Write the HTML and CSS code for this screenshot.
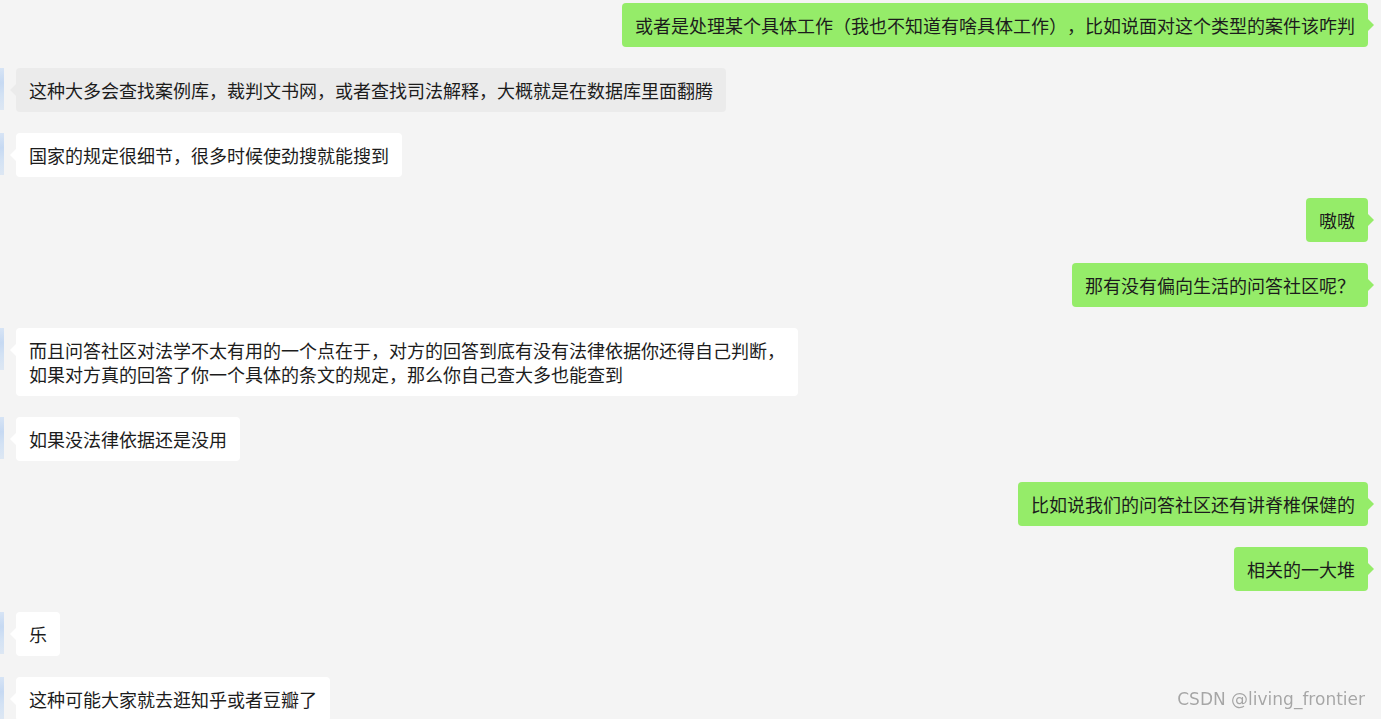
FILE: index.html
```html
<!DOCTYPE html>
<html lang="zh-CN">
<head>
<meta charset="utf-8">
<title>聊天记录</title>
<link rel="stylesheet" href="styles.css">
</head>
<body>
<div class="chat">
  <div class="row right"><div class="bubble green">或者是处理某个具体工作（我也不知道有啥具体工作），比如说面对这个类型的案件该咋判</div></div>
  <div class="row left"><div class="avatar"></div><div class="bubble gray">这种大多会查找案例库，裁判文书网，或者查找司法解释，大概就是在数据库里面翻腾</div></div>
  <div class="row left"><div class="avatar"></div><div class="bubble white">国家的规定很细节，很多时候使劲搜就能搜到</div></div>
  <div class="row right"><div class="bubble green">嗷嗷</div></div>
  <div class="row right"><div class="bubble green">那有没有偏向生活的问答社区呢？</div></div>
  <div class="row left"><div class="avatar"></div><div class="bubble white">而且问答社区对法学不太有用的一个点在于，对方的回答到底有没有法律依据你还得自己判断，<br>如果对方真的回答了你一个具体的条文的规定，那么你自己查大多也能查到</div></div>
  <div class="row left"><div class="avatar"></div><div class="bubble white">如果没法律依据还是没用</div></div>
  <div class="row right"><div class="bubble green">比如说我们的问答社区还有讲脊椎保健的</div></div>
  <div class="row right"><div class="bubble green">相关的一大堆</div></div>
  <div class="row left"><div class="avatar"></div><div class="bubble white">乐</div></div>
  <div class="row left"><div class="avatar"></div><div class="bubble white">这种可能大家就去逛知乎或者豆瓣了</div></div>
</div>
<div class="watermark">CSDN @living_frontier</div>
</body>
</html>
```
FILE: styles.css
```css
html, body {
  margin: 0;
  padding: 0;
  height: 100%;
  overflow: hidden;
  background: #f4f4f4;
}

.chat {
  display: flex;
  flex-direction: column;
  gap: 21px;
  padding-top: 3px;
}

.row {
  display: flex;
  align-items: flex-start;
}

.row.right {
  justify-content: flex-end;
  padding-right: 13px;
}

.row.left {
  gap: 12px;
}

.avatar {
  width: 4px;
  height: 42px;
  background: linear-gradient(180deg, #d7e4f5 0%, #c6d9f2 35%, #d3e2f4 65%, #dde7f3 100%);
  flex: none;
}

.bubble {
  position: relative;
  padding: 10px 13px;
  border-radius: 4px;
  font-family: "Noto Sans CJK SC", "Microsoft YaHei", sans-serif;
  font-size: 18px;
  line-height: 24px;
  color: #1c1c1c;
  white-space: nowrap;
  text-spacing-trim: space-all;
}

.bubble.green { background: #95ec69; }
.bubble.white { background: #ffffff; }
.bubble.gray { background: #ebebeb; }

.bubble::before {
  content: "";
  position: absolute;
  top: 16px;
  width: 0;
  height: 0;
  border-top: 6px solid transparent;
  border-bottom: 6px solid transparent;
}

.row.right .bubble::before {
  right: -6px;
  border-left: 6px solid #95ec69;
}

.row.left .bubble::before {
  left: -6px;
  border-right: 6px solid #ffffff;
}

.row.left .bubble.gray::before {
  border-right-color: #ebebeb;
}

.watermark {
  position: fixed;
  right: 16px;
  bottom: 10px;
  font-family: "DejaVu Sans", Verdana, sans-serif;
  font-size: 17px;
  color: #a6a6a6;
  text-shadow: 0 0 1px #ffffff;
}
```
